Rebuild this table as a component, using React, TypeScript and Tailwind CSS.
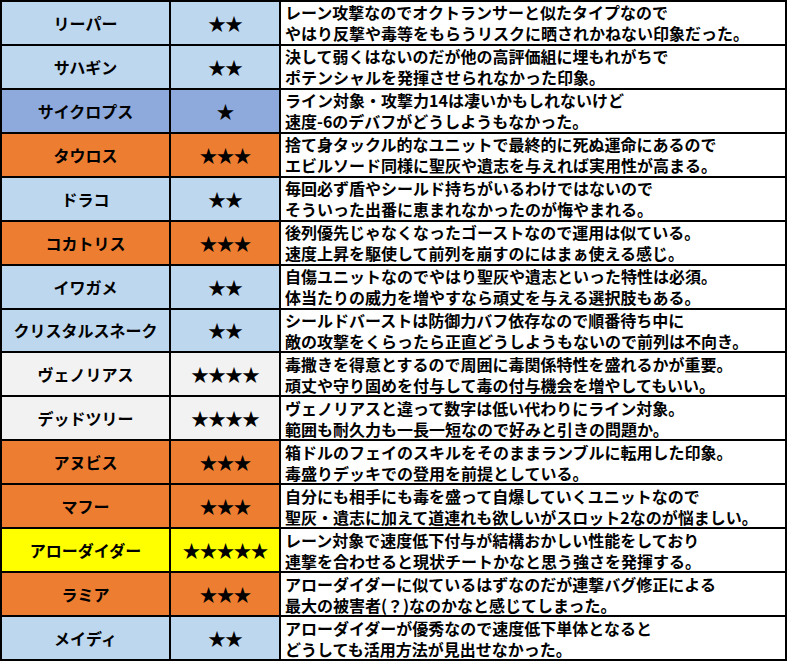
const rows = [
  { name: 'リーパー', stars: 2, bg: 'bg-[#bdd7ee]', l1: 'レーン攻撃なのでオクトランサーと似たタイプなので', l2: 'やはり反撃や毒等をもらうリスクに晒されかねない印象だった。' },
  { name: 'サハギン', stars: 2, bg: 'bg-[#bdd7ee]', l1: '決して弱くはないのだが他の高評価組に埋もれがちで', l2: 'ポテンシャルを発揮させられなかった印象。' },
  { name: 'サイクロプス', stars: 1, bg: 'bg-[#8ea9db]', l1: 'ライン対象・攻撃力14は凄いかもしれないけど', l2: '速度-6のデバフがどうしようもなかった。' },
  { name: 'タウロス', stars: 3, bg: 'bg-[#ed7d31]', l1: '捨て身タックル的なユニットで最終的に死ぬ運命にあるので', l2: 'エビルソード同様に聖灰や遺志を与えれば実用性が高まる。' },
  { name: 'ドラコ', stars: 2, bg: 'bg-[#bdd7ee]', l1: '毎回必ず盾やシールド持ちがいるわけではないので', l2: 'そういった出番に恵まれなかったのが悔やまれる。' },
  { name: 'コカトリス', stars: 3, bg: 'bg-[#ed7d31]', l1: '後列優先じゃなくなったゴーストなので運用は似ている。', l2: '速度上昇を駆使して前列を崩すのにはまぁ使える感じ。' },
  { name: 'イワガメ', stars: 2, bg: 'bg-[#bdd7ee]', l1: '自傷ユニットなのでやはり聖灰や遺志といった特性は必須。', l2: '体当たりの威力を増やすなら頑丈を与える選択肢もある。' },
  { name: 'クリスタルスネーク', stars: 2, bg: 'bg-[#bdd7ee]', l1: 'シールドバーストは防御力バフ依存なので順番待ち中に', l2: '敵の攻撃をくらったら正直どうしようもないので前列は不向き。' },
  { name: 'ヴェノリアス', stars: 4, bg: 'bg-[#f2f2f2]', l1: '毒撒きを得意とするので周囲に毒関係特性を盛れるかが重要。', l2: '頑丈や守り固めを付与して毒の付与機会を増やしてもいい。' },
  { name: 'デッドツリー', stars: 4, bg: 'bg-[#f2f2f2]', l1: 'ヴェノリアスと違って数字は低い代わりにライン対象。', l2: '範囲も耐久力も一長一短なので好みと引きの問題か。' },
  { name: 'アヌビス', stars: 3, bg: 'bg-[#ed7d31]', l1: '箱ドルのフェイのスキルをそのままランブルに転用した印象。', l2: '毒盛りデッキでの登用を前提としている。' },
  { name: 'マフー', stars: 3, bg: 'bg-[#ed7d31]', l1: '自分にも相手にも毒を盛って自爆していくユニットなので', l2: '聖灰・遺志に加えて道連れも欲しいがスロット2なのが悩ましい。' },
  { name: 'アローダイダー', stars: 5, bg: 'bg-[#ffff00]', l1: 'レーン対象で速度低下付与が結構おかしい性能をしており', l2: '連撃を合わせると現状チートかなと思う強さを発揮する。' },
  { name: 'ラミア', stars: 3, bg: 'bg-[#ed7d31]', l1: 'アローダイダーに似ているはずなのだが連撃バグ修正による', l2: '最大の被害者(？)なのかなと感じてしまった。' },
  { name: 'メイディ', stars: 2, bg: 'bg-[#bdd7ee]', l1: 'アローダイダーが優秀なので速度低下単体となると', l2: 'どうしても活用方法が見出せなかった。' },
]

export default function App() {
  return (
    <div className="w-[787px] h-[661px] bg-white overflow-hidden">
      <div className="w-[787px] h-[661px] bg-black p-[2px] grid grid-cols-[167px_108px_504px] grid-rows-[repeat(15,minmax(0,1fr))] gap-[2px] font-['Noto_Sans_CJK_JP','Noto_Sans',sans-serif] text-black">
        {rows.map((r) => (
          <div key={r.name} className="contents">
            <div className={`${r.bg} flex items-center justify-center text-[16px] font-semibold whitespace-nowrap`}>
              {r.name}
            </div>
            <div className={`${r.bg} flex items-center justify-center text-[18px] leading-none tracking-[-1px]`}>
              {'★'.repeat(r.stars)}
            </div>
            <div className="bg-white pl-[4px] text-[16px] leading-[20px] font-semibold whitespace-nowrap flex flex-col justify-center gap-[1px]">
              <span>{r.l1}</span>
              <span>{r.l2}</span>
            </div>
          </div>
        ))}
      </div>
    </div>
  )
}
